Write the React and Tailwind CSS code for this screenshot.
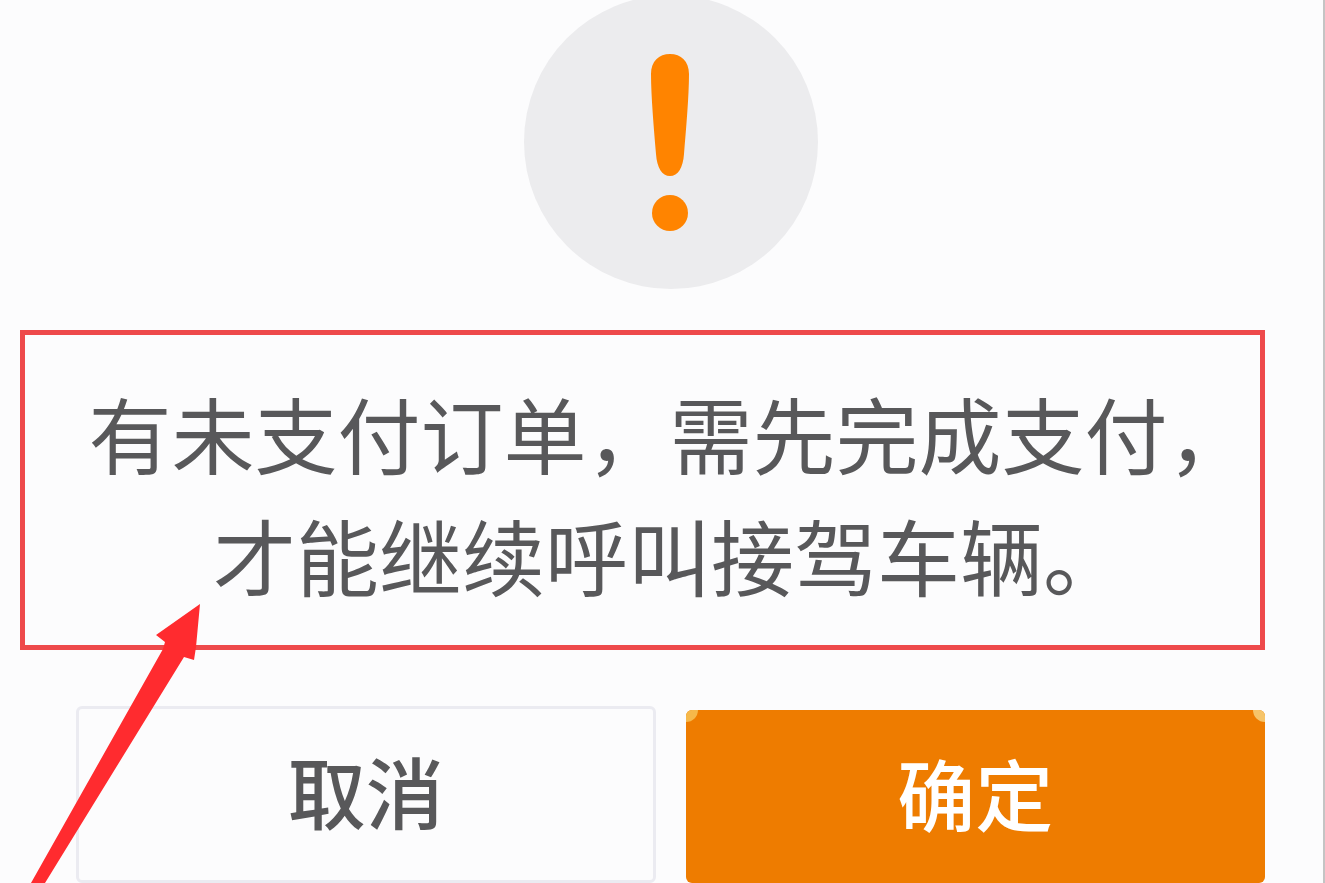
import React from "react";

const lines = ["有未支付订单，需先完成支付，", "才能继续呼叫接驾车辆。"];

function WarningIcon() {
  return (
    <svg className="-mt-[5px] size-[294px]" viewBox="0 0 294 294" aria-hidden="true">
      <circle cx="147" cy="147" r="147" fill="#ececee" />
      <path
        d="M146 59C157 59 165 66 165 79C165 101 162 135 160 159C159 173 154 181 146 181C138 181 133 173 132 159C130 135 127 101 127 79C127 66 135 59 146 59Z"
        fill="#ff8400"
      />
      <circle cx="146" cy="218" r="18" fill="#ff8400" />
    </svg>
  );
}

function Arrow() {
  return (
    <svg
      className="absolute left-0 bottom-0 w-[210px] h-[283px] pointer-events-none"
      viewBox="0 0 210 283"
      aria-hidden="true"
    >
      <path d="M200 4L156 35L165 42L163 49L31 283H45L184 57L194 60L196 47Z" fill="#ff2b2f" />
    </svg>
  );
}

function App() {
  return (
    <main
      className="relative flex min-h-screen flex-col overflow-hidden border-r-2 border-[#c4c4c4] bg-[#fcfcfd] text-[#58585a]"
      style={{ fontFamily: '"Noto Sans CJK SC", sans-serif' }}
    >
      <div className="flex justify-center pl-[76px] pr-[58px]">
        <WarningIcon />
      </div>

      <div className="mt-[41px] ml-5 mr-[58px] border-5 border-[#ee4a4b] pt-9 pb-[30px] pl-[54px]">
        <p className="text-center text-[83px] leading-[122px] whitespace-nowrap">
          {lines.map((line) => (
            <span key={line} className="block">
              {line}
            </span>
          ))}
        </p>
      </div>

      <div className="mt-14 grid flex-1 grid-cols-2 gap-[30px] pl-[76px] pr-[58px] text-[78px] leading-[115px] font-medium">
        <button
          type="button"
          className="rounded-md border-3 border-[#ebebf1] pt-6 pb-8"
        >
          取消
        </button>
        <button
          type="button"
          className="relative mt-1 overflow-hidden rounded-md bg-[#ee7c00] pt-6 pb-8 text-white"
        >
          <span className="absolute left-0 top-0 size-3 rounded-br-full bg-[#f6b84a]" />
          <span className="absolute right-0 top-0 size-3 rounded-bl-full bg-[#f6c469]" />
          确定
        </button>
      </div>

      <Arrow />
    </main>
  );
}

export default App;
